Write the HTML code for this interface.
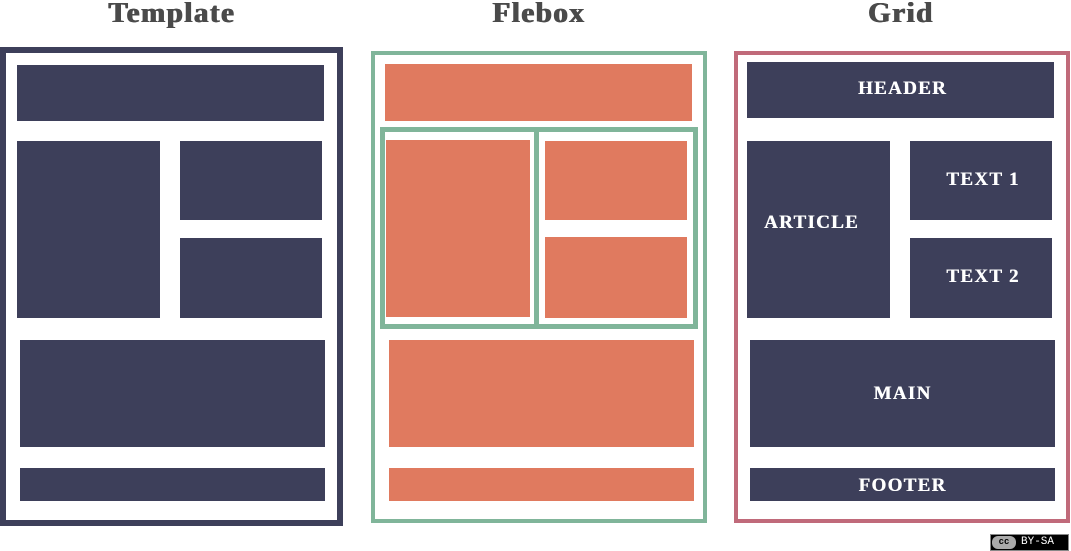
<!DOCTYPE html>
<html><head><meta charset="utf-8"><style>
body{margin:0;width:1071px;height:551px;background:#fff;position:relative;overflow:hidden}
div{position:absolute;box-sizing:border-box}
.d{background:#3d3f5a}.o{background:#e07a5f}
.t{font-family:"Liberation Serif",serif;font-weight:bold;color:#4a4a4a;font-size:29px;top:-3px;text-align:center;width:300px;letter-spacing:1.5px;text-shadow:0.6px 0 0 #4a4a4a,-0.6px 0 0 #4a4a4a}
.l{color:#fff;font-family:"Liberation Serif",serif;font-weight:bold;font-size:19px;display:flex;align-items:center;justify-content:center;letter-spacing:1.3px;text-shadow:0.4px 0 0 #fff}
</style></head><body>
<div class="t" style="left:22px">Template</div>
<div class="t" style="left:389px">Flebox</div>
<div class="t" style="left:751px">Grid</div>

<div style="left:0;top:47px;width:343px;height:479px;border:6px solid #3d3f5a"></div>
<div class="d" style="left:17px;top:65px;width:307px;height:56px"></div>
<div class="d" style="left:17px;top:141px;width:143px;height:177px"></div>
<div class="d" style="left:180px;top:141px;width:142px;height:79px"></div>
<div class="d" style="left:180px;top:238px;width:142px;height:80px"></div>
<div class="d" style="left:20px;top:340px;width:305px;height:107px"></div>
<div class="d" style="left:20px;top:468px;width:305px;height:33px"></div>

<div style="left:371px;top:51px;width:336px;height:472px;border:4px solid #80b59a"></div>
<div class="o" style="left:385px;top:64px;width:307px;height:57px"></div>
<div style="left:380px;top:127px;width:318px;height:202px;border:5px solid #80b59a"></div>
<div style="left:534px;top:127px;width:5px;height:202px;background:#80b59a"></div>
<div class="o" style="left:386px;top:140px;width:144px;height:177px"></div>
<div class="o" style="left:545px;top:141px;width:142px;height:79px"></div>
<div class="o" style="left:545px;top:237px;width:142px;height:81px"></div>
<div class="o" style="left:389px;top:340px;width:305px;height:107px"></div>
<div class="o" style="left:389px;top:468px;width:305px;height:33px"></div>

<div style="left:734px;top:51px;width:336px;height:472px;border:4px solid #c06a7a"></div>
<div class="d l" style="left:747px;top:62px;width:307px;height:56px;padding-bottom:3px;padding-left:4px">HEADER</div>
<div class="d l" style="left:747px;top:141px;width:143px;height:177px;justify-content:flex-start;padding-left:17px;padding-bottom:14px">ARTICLE</div>
<div class="d l" style="left:910px;top:141px;width:142px;height:79px;padding-bottom:2px;padding-left:4px">TEXT 1</div>
<div class="d l" style="left:910px;top:238px;width:142px;height:80px;padding-bottom:2px;padding-left:4px">TEXT 2</div>
<div class="d l" style="left:750px;top:340px;width:305px;height:107px">MAIN</div>
<div class="d l" style="left:750px;top:468px;width:305px;height:33px;padding-top:2px">FOOTER</div>

<div style="left:990px;top:534px;width:79px;height:17px;background:#000;border:1px solid #888"></div>
<div style="left:992px;top:536px;width:24px;height:13px;background:#aaa;border-radius:6px;font:bold 9px 'Liberation Mono',monospace;color:#000;text-align:center;line-height:13px">cc</div>
<div style="left:1021px;top:535px;font:11px 'Liberation Mono',monospace;color:#fff;line-height:15px">BY-SA</div>
</body></html>
